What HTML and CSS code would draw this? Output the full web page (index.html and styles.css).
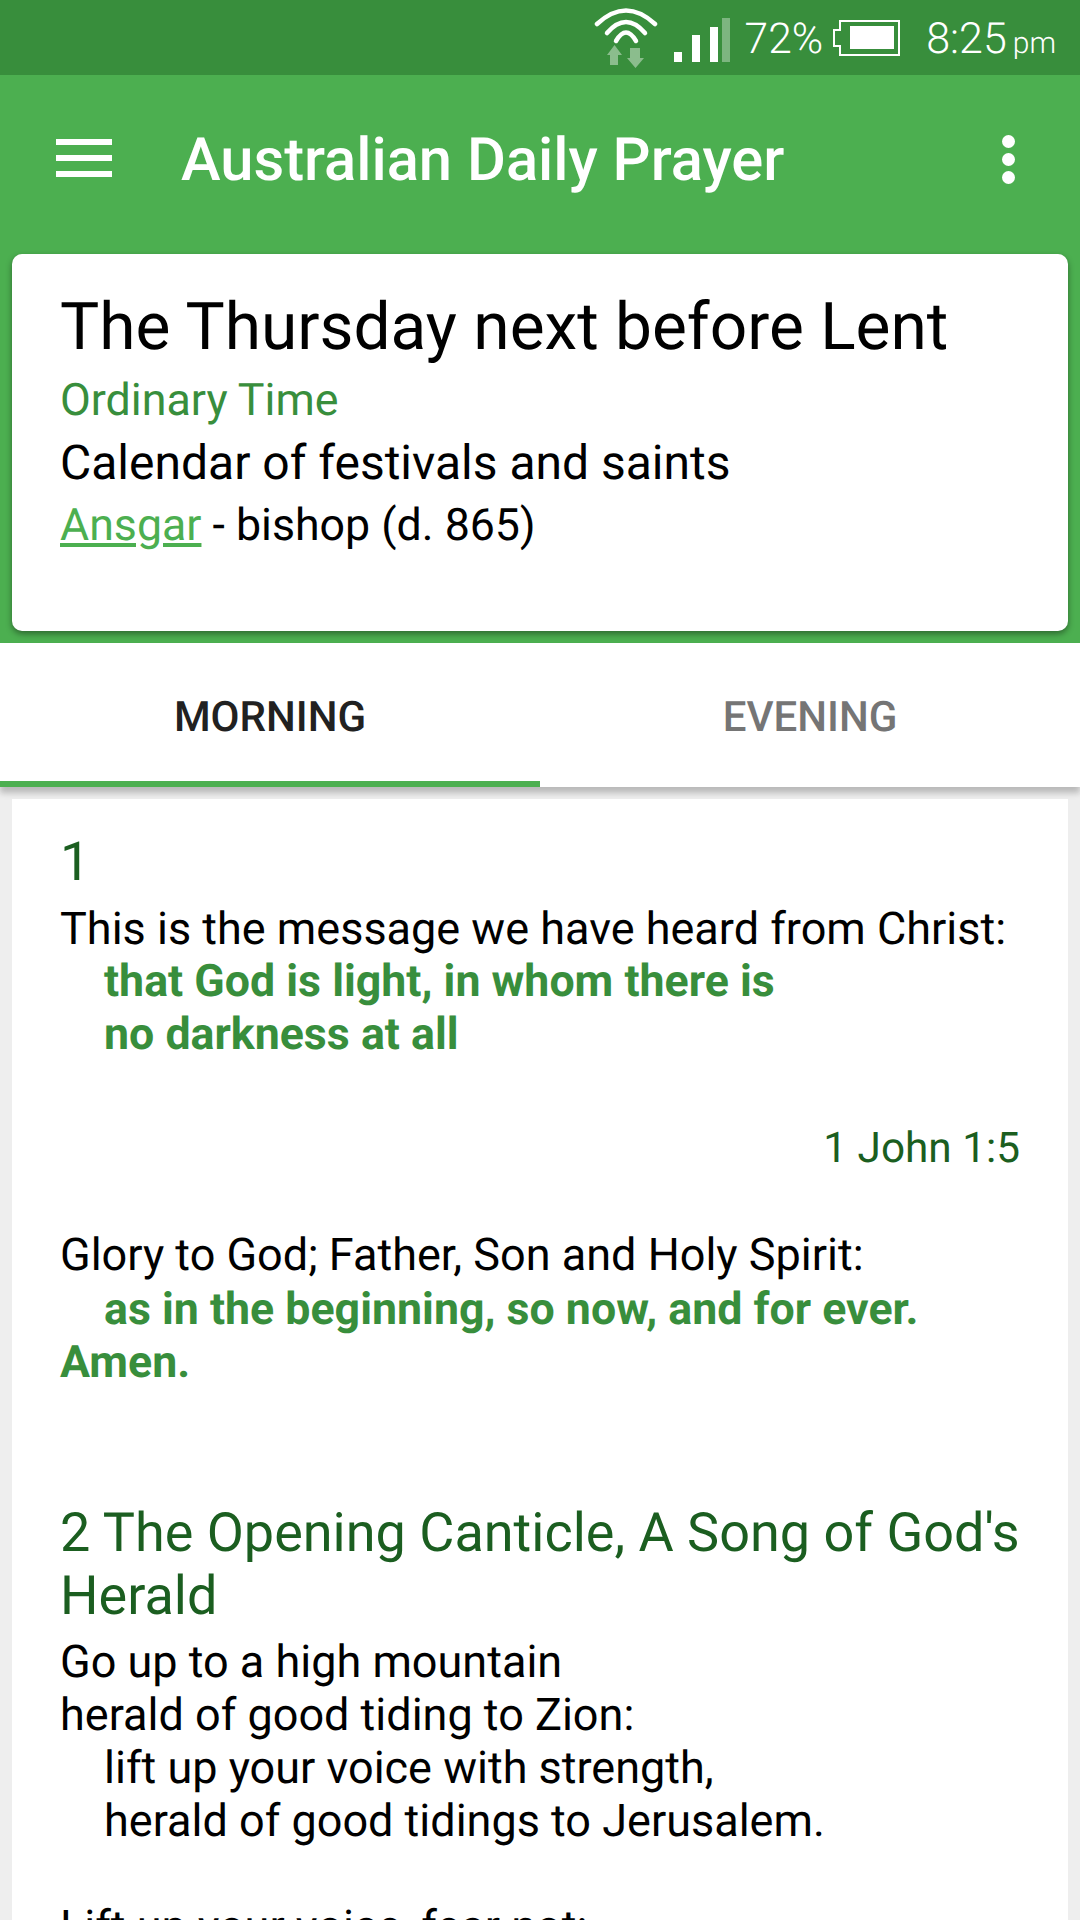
FILE: index.html
```html
<!DOCTYPE html>
<html lang="en">
<head>
<meta charset="utf-8">
<title>Australian Daily Prayer</title>
<link rel="stylesheet" href="styles.css">
</head>
<body>
<div class="screen">
  <div class="status">
    <svg class="ic-wifi" width="62" height="60" viewBox="0 0 62 60">
      <g fill="none" stroke="#fff" stroke-width="4.5" stroke-linecap="round">
        <path d="M2 16 Q31 -11 60 16"/>
        <path d="M12 25 Q31 3 50 25"/>
        <path d="M21 33 Q31 16 41 33"/>
      </g>
      <g fill="#fff" fill-opacity=".42">
        <path d="M19.5 37 L27 47 H23 V57 H15 V47 H12 Z"/>
        <path d="M35 40 H45 V50 H49 L40.5 60 L32 50 H35 Z"/>
      </g>
    </svg>
    <svg class="ic-signal" width="56" height="44" viewBox="0 0 56 44">
      <rect x="0" y="34" width="8" height="10" fill="#fff"/>
      <rect x="18" y="17" width="8" height="27" fill="#fff"/>
      <rect x="36" y="9" width="8" height="35" fill="#fff"/>
      <rect x="48" y="0" width="8" height="44" fill="#fff" fill-opacity=".35"/>
    </svg>
    <span class="st-pct">72%</span>
    <svg class="ic-batt" width="67" height="36" viewBox="0 0 67 36">
      <path d="M66 1 H7 V10 H1 V26 H7 V35 H66 Z" fill="none" stroke="#fff" stroke-width="2"/>
      <rect x="17" y="6" width="44" height="23" fill="#fff"/>
    </svg>
    <span class="st-clock">8:25<small class="st-ampm">pm</small></span>
  </div>

  <header class="appbar">
    <div class="bar-row">
      <div class="burger"><i></i><i></i><i></i></div>
      <h1 class="app-title">Australian Daily Prayer</h1>
      <div class="kebab"><i></i><i></i><i></i></div>
    </div>
    <section class="day-card">
      <h2 class="day-title">The Thursday next before Lent</h2>
      <p class="season">Ordinary Time</p>
      <p class="cal cal-head">Calendar of festivals and saints</p>
      <p class="cal"><a class="saint" href="#">Ansgar</a> - bishop (d. 865)</p>
    </section>
  </header>

  <nav class="tabs">
    <div class="tab active">MORNING</div>
    <div class="tab">EVENING</div>
  </nav>

  <main class="content">
    <article class="office">
      <h3 class="sec first">1</h3>
      <p class="line">This is the message we have heard from Christ:</p>
      <p class="line ind resp">that God is light, in whom there is</p>
      <p class="line ind resp">no darkness at all</p>
      <p class="ref">1 John 1:5</p>
      <p class="line">Glory to God; Father, Son and Holy Spirit:</p>
      <p class="line first-ind resp">as in the beginning, so now, and for ever. Amen.</p>
      <h3 class="sec second">2 The Opening Canticle, A Song of God's Herald</h3>
      <p class="line">Go up to a high mountain</p>
      <p class="line">herald of good tiding to Zion:</p>
      <p class="line ind">lift up your voice with strength,</p>
      <p class="line ind">herald of good tidings to Jerusalem.</p>
      <p class="line gap">Lift up your voice, fear not:</p>
    </article>
  </main>
</div>
</body>
</html>
```
FILE: styles.css
```css
* { box-sizing: border-box; margin: 0; padding: 0; }
html, body { width: 1080px; height: 1920px; overflow: hidden; }
body { font-family: Roboto, "Noto Sans", sans-serif; background: #eeeeee; color: #000; text-rendering: geometricPrecision; }
.screen { width: 1080px; height: 1920px; display: flex; flex-direction: column; overflow: hidden; }

.status { height: 75px; flex: none; background: #388e3c; color: #fff; display: flex; align-items: center; justify-content: flex-end; padding-right: 24px; }
.ic-wifi { margin-right: 17px; margin-top: 1px; overflow: visible; }
.ic-signal { margin-right: 15px; margin-top: 5px; }
.st-pct { font-size: 42.5px; font-weight: 300; margin-right: 10px; margin-top: 3px; }
.ic-batt { margin-right: 26px; }
.st-clock { font-size: 43px; font-weight: 300; margin-top: 3px; }
.st-ampm { font-size: 30px; font-weight: 300; margin-left: 6px; }

.appbar { height: 568px; flex: none; background: #4caf50; padding: 0 12px; display: flex; flex-direction: column; }
.bar-row { height: 179px; flex: none; display: flex; align-items: center; margin: 0 -12px; padding: 0 0 11px 56px; }
.burger { width: 56px; height: 38px; display: flex; flex-direction: column; justify-content: space-between; flex: none; margin-top: -2px; }
.burger i { display: block; height: 6px; background: #fff; }
.app-title { font-size: 59.7px; font-weight: 500; color: #fff; margin-left: 69px; margin-top: 2px; flex: 1; line-height: 70px; }
.kebab { width: 13px; height: 49px; display: flex; flex-direction: column; justify-content: space-between; margin-right: 65px; flex: none; }
.kebab i { display: block; width: 13px; height: 13px; border-radius: 50%; background: #fff; }

.day-card { height: 377px; background: #fff; border-radius: 10px; padding: 33px 48px 0; box-shadow: 0 3px 6px rgba(0,0,0,.4); }
.day-title { font-size: 65.8px; font-weight: 400; line-height: 81px; }
.season { font-size: 44.8px; line-height: 63px; color: #388e3c; }
.cal { font-size: 44.7px; line-height: 63px; }
.cal-head { font-size: 48px; }
.saint { color: #4caf50; text-decoration: underline; }

.tabs { height: 144px; flex: none; background: #fff; display: flex; box-shadow: 0 6px 6px rgba(0,0,0,.22); }
.tab { flex: 1; display: flex; align-items: center; justify-content: center; font-size: 42px; font-weight: 500; color: #757575; padding-top: 5px; }
.tab.active { color: #212121; box-shadow: inset 0 -6px 0 #4caf50; }

.content { flex: 1; padding: 12px 12px 0; min-height: 0; }
.office { background: #fff; height: 100%; padding: 32px 48px 0; overflow: hidden; }
.sec { font-size: 54px; font-weight: 400; line-height: 63px; color: #1b5e20; }
.sec.second { margin-top: 113px; }
.line { font-size: 45px; line-height: 53px; }
.first + .line { margin-top: 8px; }
.ind { padding-left: 44px; }
.first-ind { text-indent: 44px; margin-top: 2px; }
.resp { color: #388e3c; font-weight: 700; font-size: 44.7px; }
.ref { font-size: 42.3px; line-height: 53px; text-align: right; color: #1b5e20; margin: 61px 0 53px; }
.second + .line { margin-top: 7px; }
.gap { margin-top: 53px; }
```
